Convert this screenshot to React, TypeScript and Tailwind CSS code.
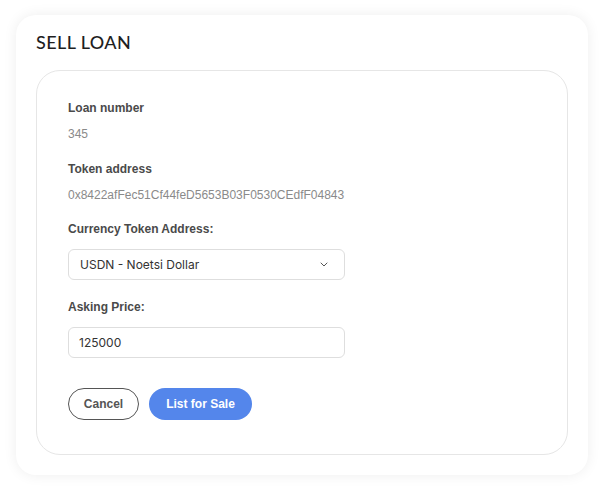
import React from "react";

export default function App() {
  return (
    <div className="w-[604px] h-[491px] bg-white pt-[15px] pl-[16px]">
      <div className="w-[572px] h-[460px] rounded-[20px] bg-white shadow-[0_0_14px_rgba(0,0,0,0.07)] px-[20px] pt-[13px] pb-[20px] flex flex-col">
        <h1 className="text-[18px] leading-[28px] font-medium tracking-[0.4px] text-[#1f1f1f] font-['Lato','Inter',sans-serif] h-[42px]">
          SELL LOAN
        </h1>
        <div className="flex-1 rounded-[24px] border border-[#e6e6e6] pl-[31px] pt-[29px]">
          <div className="font-['Liberation_Sans',Arial,sans-serif] text-[12px] leading-[16px]">
            <div className="font-bold text-[#4a4a4a]">Loan number</div>
            <div className="mt-[10px] text-[#8a8a8a]">345</div>
            <div className="mt-[19px] font-bold text-[#4a4a4a]">Token address</div>
            <div className="mt-[10px] text-[#8a8a8a]">0x8422afFec51Cf44feD5653B03F0530CEdfF04843</div>
            <div className="mt-[18px] font-bold text-[#4a4a4a]">Currency Token Address:</div>
            <div className="mt-[12px] w-[277px] h-[31px] rounded-[6px] border border-[#dedede] flex items-center justify-between pl-[11px] pr-[16px] font-['Inter',sans-serif] text-[12px] text-[#333]">
              <span>USDN - Noetsi Dollar</span>
              <svg width="8" height="5" viewBox="0 0 8 5" fill="none">
                <path d="M1 1L4 4L7 1" stroke="#555" strokeWidth="1" strokeLinecap="round" strokeLinejoin="round" />
              </svg>
            </div>
            <div className="mt-[19px] font-bold text-[#4a4a4a]">Asking Price:</div>
            <div className="mt-[12px] w-[277px] h-[31px] rounded-[6px] border border-[#dedede] flex items-center pl-[10px] font-['Inter',sans-serif] text-[12px] text-[#333]">
              125000
            </div>
            <div className="mt-[30px] flex gap-[10px]">
              <button className="w-[71px] h-[32px] rounded-full border border-[#555] text-[12px] font-bold text-[#555] bg-white">
                Cancel
              </button>
              <button className="w-[103px] h-[32px] rounded-full bg-[#5486eb] text-[12px] font-bold text-white">
                List for Sale
              </button>
            </div>
          </div>
        </div>
      </div>
    </div>
  );
}
